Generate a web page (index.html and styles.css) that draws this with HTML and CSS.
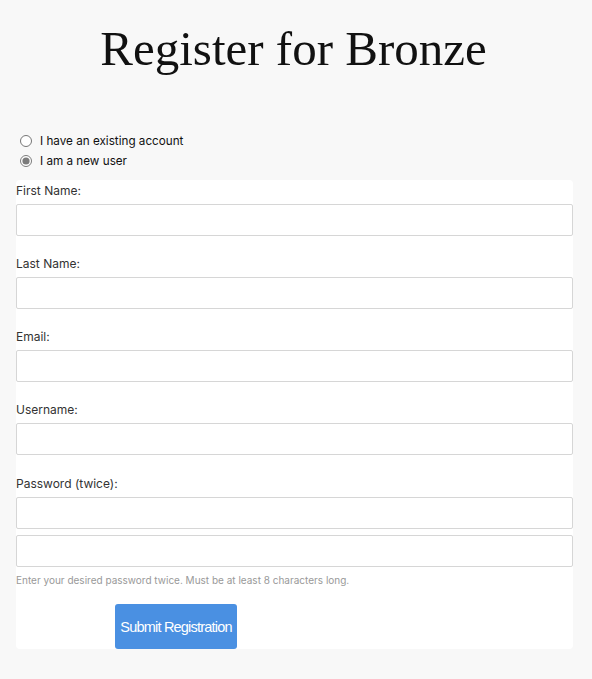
FILE: index.html
```html
<!DOCTYPE html>
<html>
<head>
<meta charset="utf-8">
<link rel="stylesheet" href="styles.css">
</head>
<body>
<div class="page">
  <h1 class="title">Register for Bronze</h1>
  <div class="choices">
    <label class="choice"><input type="radio" name="mode"> I have an existing account</label>
    <label class="choice"><input type="radio" name="mode" checked> I am a new user</label>
  </div>
  <form class="panel">
    <div class="field">
      <label class="lbl">First Name:</label>
      <input class="inp" type="text">
    </div>
    <div class="field">
      <label class="lbl">Last Name:</label>
      <input class="inp" type="text">
    </div>
    <div class="field">
      <label class="lbl">Email:</label>
      <input class="inp" type="text">
    </div>
    <div class="field wide">
      <label class="lbl">Username:</label>
      <input class="inp" type="text">
    </div>
    <div class="field last">
      <label class="lbl">Password (twice):</label>
      <input class="inp" type="password">
      <input class="inp second" type="password">
      <div class="hint">Enter your desired password twice. Must be at least 8 characters long.</div>
    </div>
    <div class="actions">
      <button class="submit" type="button">Submit Registration</button>
    </div>
  </form>
</div>
</body>
</html>
```

FILE: styles.css
```css
html, body {
  margin: 0;
  padding: 0;
  background: #f8f8f8;
}
body {
  font-family: Inter, "Noto Sans", sans-serif;
  color: #222;
}
.page {
  padding: 0 19px 0 16px;
}
.title {
  font-family: "Liberation Serif", serif;
  font-weight: normal;
  font-size: 49px;
  line-height: 60px;
  text-align: center;
  color: #111;
  margin: 19px 0 0 0;
  padding-right: 2px;
}
.choices {
  margin-top: 52px;
  display: flex;
  flex-direction: column;
}
.choice {
  font-size: 11.7px;
  line-height: 20px;
  height: 20px;
  display: flex;
  align-items: center;
  color: #111;
}
.choice input {
  margin: 0 8px 0 4px;
  width: 12px;
  height: 12px;
  accent-color: #7b7b7b;
}
.panel {
  background: #fff;
  border-radius: 4px;
  margin-top: 9px;
  display: flex;
  flex-direction: column;
}
.field {
  display: flex;
  flex-direction: column;
  padding-top: 2px;
  margin-bottom: 17px;
}
.field.wide {
  margin-bottom: 18px;
}
.field.last {
  margin-bottom: 0;
}
.lbl {
  font-size: 12px;
  line-height: 18px;
  color: #333;
  margin-bottom: 4px;
}
.inp {
  box-sizing: border-box;
  height: 32px;
  margin: 0;
  border: 1px solid #d6d6d6;
  border-radius: 2px;
  background: #fff;
  font-family: inherit;
  padding: 0 8px;
}
.inp.second {
  margin-top: 6px;
}
.hint {
  font-size: 10px;
  line-height: 14px;
  color: #999;
  margin-top: 6px;
}
.actions {
  margin-top: 17px;
  padding-left: 99px;
}
.submit {
  width: 122px;
  height: 45px;
  border: none;
  border-radius: 3px;
  background: #4a90e2;
  color: #fff;
  font-family: "Liberation Sans", Arial, sans-serif;
  font-size: 14.5px;
  letter-spacing: -0.8px;
  white-space: nowrap;
  padding: 0;
}
```
